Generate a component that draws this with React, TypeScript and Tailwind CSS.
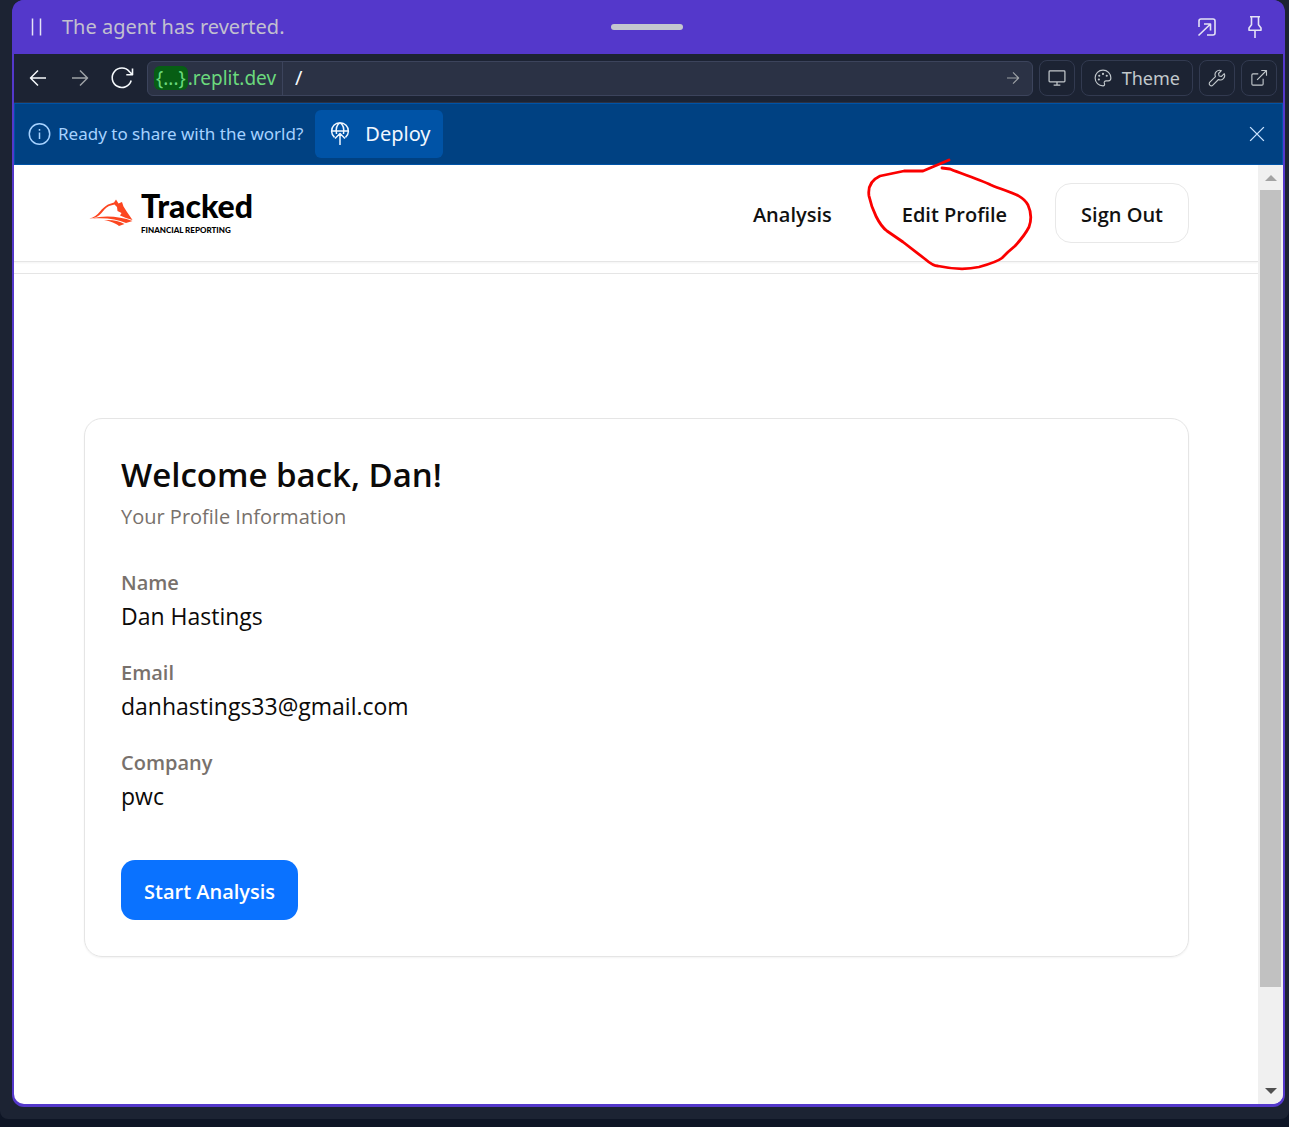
import React from "react";

const ui = "font-['Open_Sans','Noto_Sans',sans-serif]";
const chrome = "font-['Noto_Sans','Open_Sans',sans-serif]";

type IconProps = { className?: string; children: React.ReactNode; box?: string; width?: number };

function Icon({ className = "", children, box = "0 0 24 24", width = 1.5 }: IconProps) {
  return (
    <svg viewBox={box} fill="none" stroke="currentColor" strokeWidth={width} strokeLinejoin="round" className={`shrink-0 ${className}`} aria-hidden="true">
      {children}
    </svg>
  );
}

function TitleBar() {
  return (
    <header className="grid h-[54px] shrink-0 grid-cols-[1fr_auto_1fr] items-center bg-[#5438cb] pr-4 pl-3 text-[#e4e2f5]">
      <div className="flex items-center gap-3">
        <button aria-label="Pause">
          <Icon className="size-6" width={1.5}><path d="M6.5 3.5v17M14.5 3.5v17" /></Icon>
        </button>
        <span className="text-xl leading-6 text-[#c2c0cf]">The agent has reverted.</span>
      </div>
      <div className="h-1.5 w-[72px] rounded-full bg-[#c3c7cf]" />
      <div className="flex items-center justify-end gap-6">
        <button aria-label="Open in window">
          <Icon className="size-6" width={1.6}>
            <path d="M4 12V6q0-2 2-2h12q2 0 2 2v12q0 2-2 2h-6M9 9h6.500v6.500M15.500 9L3.500 20.500" />
          </Icon>
        </button>
        <button aria-label="Pin">
          <Icon className="size-6" width={1.6}>
            <path d="M7 1.800h10M8.500 1.800v8L6 13v2.300h12V13l-2.500-3.200v-8M12 15.300V23" />
          </Icon>
        </button>
      </div>
    </header>
  );
}

function ToolButton({ label, children }: { label: string; children: React.ReactNode }) {
  return (
    <button aria-label={label} className="flex size-9 shrink-0 items-center justify-center rounded-lg border border-[#323a50] text-[#c2c8cc]">
      {children}
    </button>
  );
}

function AddressBar() {
  return (
    <div className="flex h-[49px] shrink-0 items-center border-b border-[#2b3245] bg-[#1c2333] pr-1.5 pl-3">
      <button aria-label="Back" className="text-[#f5f9fc]">
        <Icon className="size-6"><path d="M20 12H4.500M12 4.500L4.500 12l7.500 7.500" /></Icon>
      </button>
      <button aria-label="Forward" className="ml-[18px] text-[#9da2a6]">
        <Icon className="size-6"><path d="M4 12h15.500M12 4.500l7.500 7.500-7.500 7.500" /></Icon>
      </button>
      <button aria-label="Reload" className="ml-[18px] text-[#f5f9fc]">
        <Icon className="size-6" width={1.600}><path d="M21.200 14.500A9.700 9.700 0 1 1 19.500 5.700L22.300 8.500M22.500 2.500V8.700H16.300" /></Icon>
      </button>
      <div className="ml-[13px] flex h-[35px] min-w-0 flex-1 items-center rounded-md border border-[#3c445c] bg-[#2b3245]">
        <div className="flex h-full items-center border-r border-[#3c445c] pr-1.5 pl-1.5 text-[19px] leading-6 text-[#6bd97d]">
          <span className="rounded-md bg-[#075e14] px-0.5">{"{...}"}</span>
          <span>.replit.dev</span>
        </div>
        <input aria-label="Path" defaultValue="/" className="min-w-0 flex-1 bg-transparent pl-3 text-xl leading-6 text-[#f5f9fc] outline-none" />
        <button aria-label="Go" className="mr-2.5 text-[#9da2a6]">
          <Icon className="size-[18px]"><path d="M4 12h15.500M12 4.500l7.500 7.500-7.500 7.500" /></Icon>
        </button>
      </div>
      <div className="ml-1.5 flex items-center gap-1.5">
        <ToolButton label="Screen size">
          <Icon className="size-5"><path d="M3.500 3.500h17a1 1 0 0 1 1 1v11a1 1 0 0 1-1 1h-17a1 1 0 0 1-1-1v-11a1 1 0 0 1 1-1zM12 16.500v4M8 20.500h8" /></Icon>
        </ToolButton>
        <button className="flex h-9 items-center gap-2.5 rounded-lg border border-[#323a50] px-3 text-lg leading-6 text-[#c2c8cc]">
          <Icon className="size-[18px]">
            <path d="M12 1.500a10.500 10.500 0 1 0 0 21c1.800 0 2.700-1.500 1.900-3-.9-1.900.1-3.700 2.300-3.700h2.800c2 0 3.500-1.600 3.500-3.800C22.500 6.200 17.800 1.500 12 1.500z" />
            <circle cx="12" cy="6.500" r=".7" /><circle cx="7" cy="9" r=".7" /><circle cx="17" cy="9" r=".7" /><circle cx="6.500" cy="14" r=".7" />
          </Icon>
          Theme
        </button>
        <ToolButton label="Developer tools">
          <Icon className="size-[18px]">
            <path d="M21.700 6.200l-3.700 3.700-3.300-.6-.6-3.300 3.700-3.700c-2.300-1-5-.5-6.700 1.200-1.800 1.800-2.200 4.300-1.200 6.600L2.500 17.500a2.700 2.700 0 0 0 4 4L13.900 14c2.300 1 4.800.6 6.600-1.200 1.700-1.700 2.200-4.300 1.200-6.600z" />
          </Icon>
        </ToolButton>
        <ToolButton label="Open in new tab">
          <Icon className="size-[18px]"><path d="M17.500 13v7a1.500 1.500 0 0 1-1.500 1.500H4A1.500 1.500 0 0 1 2.500 20V8A1.500 1.500 0 0 1 4 6.500h7M15 2h7v7M22 2L9.500 14.500" /></Icon>
        </ToolButton>
      </div>
    </div>
  );
}

function DeployBanner() {
  return (
    <div className="flex h-[62px] shrink-0 items-center border border-[#0053a6] bg-[#004182] pr-3.5 pl-3 text-[#a6d2ff]">
      <Icon className="size-6" width={1.500}><circle cx="12.500" cy="12" r="10.200" /><path d="M12.500 10.500v6.500M12.500 7v1.700" /></Icon>
      <span className="ml-[7px] text-[17px] leading-6">Ready to share with the world?</span>
      <button className="ml-3 flex h-12 items-center gap-3 rounded-md bg-[#0053a6] px-3 text-xl leading-6 text-[#f0f7ff]">
        <Icon className="size-[26px]" box="0 0 26 26" width={1.500}>
          <path d="M7.500 16.400A8.400 8.400 0 1 1 18.500 16.400M4.700 10h16.600M9.500 13C8.700 8 10 3.500 13 1.700C16 3.500 17.300 8 16.500 13M13 24V12.500M8 17.500l5-5 5 5" />
        </Icon>
        Deploy
      </button>
      <button aria-label="Dismiss" className="ml-auto text-[#c9e3ff]">
        <Icon className="size-[22px]"><path d="M4.500 4.500l15 15M19.500 4.500l-15 15" /></Icon>
      </button>
    </div>
  );
}

function Logo() {
  return (
    <a href="#home" className="flex items-center gap-2 text-black">
      <svg viewBox="0 0 44 28" className="h-7 w-11" aria-hidden="true">
        <path d="M0.500 19.500C5 18.500 8 16 11 12.500C13 10 16 7 19 5.500L25 3.500L27 0.500L29.500 4.500L33 3L34.500 7.500L38 13L43.500 21L37 19L31 16.500L32.500 14L28.500 12L28 8L25.500 5.500L20 7C16.500 9 14.500 11.500 12.500 14C9.500 17.500 5.500 19.800 0.500 19.500z" fill="#fc4620" />
        <path d="M3 19.500C14 16 31 17 43.500 22L37 24C28 20 17 18.500 3 19.500z" fill="#fc4620" />
        <path d="M15 21C23 20.500 30 21.500 35.500 25L30 27C27 24.500 23 22.500 15 21z" fill="#fc4620" />
      </svg>
      <span className="flex flex-col font-['Lato',sans-serif]">
        <span className="text-[32px] leading-8 font-black">Tracked</span>
        <span className="mt-0.5 text-[8px] leading-3 font-black">FINANCIAL REPORTING</span>
      </span>
    </a>
  );
}

function SiteHeader() {
  return (
    <>
      <div className="flex h-[97px] shrink-0 items-center justify-between border-b border-[#e5e5e5] pr-[69px] pl-[75px] shadow-xs">
        <Logo />
        <nav className="flex items-center text-xl leading-7 font-semibold text-[#111]">
          <a href="#analysis" className="pt-1">Analysis</a>
          <span className="relative ml-[70px] pt-1">
            <a href="#profile">Edit Profile</a>
            <svg viewBox="0 0 170 116" className="pointer-events-none absolute -top-[39px] -left-[35px] z-10 h-[116px] w-[170px] max-w-none" fill="none" stroke="#fb0000" strokeWidth="2.800" strokeLinecap="round" strokeLinejoin="round" aria-hidden="true">
              <path d="M82 2L56 13H37L13 18Q0 24 2 38C5 52 12 67 20 73L36 84L58 101Q66 108 71 108Q94 113 112 109Q130 104 135 100L141 94L148 88Q158 77 162 69Q166 58 161 47C155 36 143 35 124 27C112 21 87 13 83 11L75 10" />
            </svg>
          </span>
          <button className="ml-12 h-[60px] rounded-2xl border border-[#e8e8e8] px-[25px] pt-1 font-semibold">Sign Out</button>
        </nav>
      </div>
      <div className="h-3 shrink-0 border-b border-[#e5e5e5]" />
    </>
  );
}

const details = [
  { label: "Name", value: "Dan Hastings" },
  { label: "Email", value: "danhastings33@gmail.com" },
  { label: "Company", value: "pwc" },
];

function ProfileCard() {
  return (
    <section className="mt-36 mr-[69px] ml-[70px] rounded-[18px] border border-[#e5e5e5] p-9 shadow-xs">
      <h1 className="text-[33px] leading-10 font-semibold text-[#0c0a09]">Welcome back, Dan!</h1>
      <p className="mt-2 text-xl leading-7 text-[#78716c]">Your Profile Information</p>
      <dl className="mt-[37px] flex flex-col gap-6">
        {details.map((d) => (
          <div key={d.label}>
            <dt className="text-xl leading-[30px] font-semibold text-[#78716c]">{d.label}</dt>
            <dd className="text-[23px] leading-9 text-[#0c0a09]">{d.value}</dd>
          </div>
        ))}
      </dl>
      <button className="mt-[46px] h-[60px] rounded-[14px] bg-[#0a72ff] px-[23px] pt-1 text-xl leading-7 font-semibold text-white">Start Analysis</button>
    </section>
  );
}

function Scrollbar() {
  return (
    <div className="flex w-[25px] shrink-0 flex-col items-center bg-[#f0f0f0]" aria-hidden="true">
      <svg viewBox="0 0 12 6" className="mt-2.5 mb-[9px] h-1.5 w-3"><path d="M0 6L6 0l6 6z" fill="#a3a3a3" /></svg>
      <div className="w-[21px] flex-[797] bg-[#c1c1c1]" />
      <div className="flex-[101]" />
      <svg viewBox="0 0 12 6" className="mb-2.5 h-1.5 w-3"><path d="M0 0l6 6 6-6z" fill="#505050" /></svg>
    </div>
  );
}

export default function App() {
  return (
    <div className={`flex min-h-screen flex-col bg-[#0e1525] pb-2 ${chrome}`}>
      <div className="flex flex-1 flex-col rounded-b-lg bg-[#1c2333] pr-1 pb-3 pl-3">
        <div className="flex flex-1 flex-col overflow-hidden rounded-xl bg-[#5438cb] px-0.5 pb-[3px]">
          <TitleBar />
          <AddressBar />
          <DeployBanner />
          <div className={`flex flex-1 overflow-visible rounded-b-[10px] bg-white ${ui}`}>
            <main className="flex min-w-0 flex-1 flex-col">
              <SiteHeader />
              <ProfileCard />
            </main>
            <div className="flex overflow-hidden rounded-br-[10px]"><Scrollbar /></div>
          </div>
        </div>
      </div>
    </div>
  );
}
